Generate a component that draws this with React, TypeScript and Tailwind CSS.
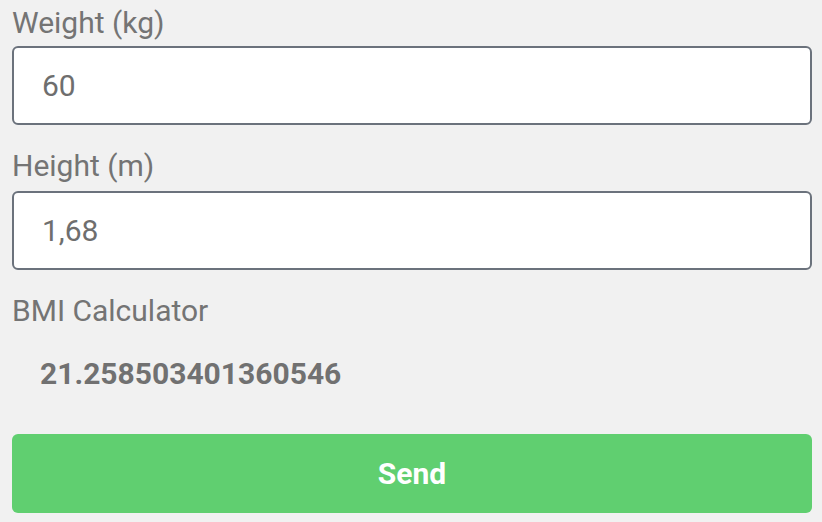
import React from 'react';

const App: React.FC = () => {
  return (
    <div className="min-h-[522px] w-full bg-[#f1f1f1] pl-[12px] pr-[10px] pt-[6px] font-['Roboto',sans-serif] text-[30px]">
      <label className="block leading-[34px] text-[#747474]">Weight (kg)</label>
      <input
        type="text"
        defaultValue="60"
        className="mt-[6px] block h-[79px] w-full rounded-[6px] border-2 border-[#6b727c] bg-white pl-[28px] text-[30px] text-[#6e6e6e] outline-none"
      />

      <label className="mt-[24px] block leading-[34px] text-[#747474]">Height (m)</label>
      <input
        type="text"
        defaultValue="1,68"
        className="mt-[8px] block h-[79px] w-full rounded-[6px] border-2 border-[#6b727c] bg-white pl-[28px] text-[30px] text-[#6e6e6e] outline-none"
      />

      <div className="mt-[24px] leading-[34px] text-[#747474]">BMI Calculator</div>
      <div className="mt-[29px] pl-[28px] font-bold leading-[34px] text-[#717171]">21.258503401360546</div>

      <button className="mt-[43px] flex h-[79px] w-full items-center justify-center rounded-[6px] bg-[#60cf70] font-bold text-white">
        Send
      </button>
    </div>
  );
};

export default App;
